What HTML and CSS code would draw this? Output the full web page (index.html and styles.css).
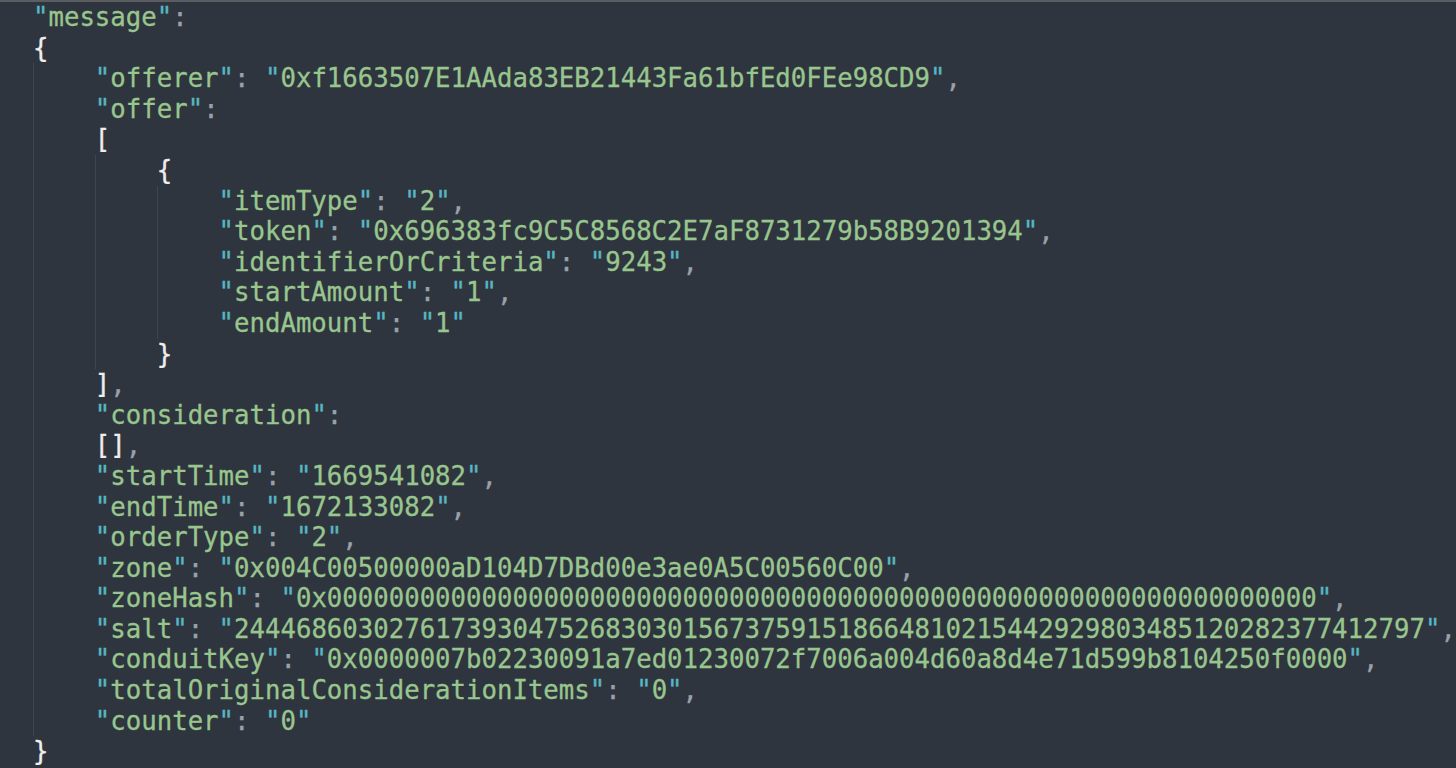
FILE: index.html
```html
<!DOCTYPE html>
<html>
<head>
<meta charset="utf-8">
<link rel="stylesheet" href="styles.css">
</head>
<body>
<div class="code">
<div class="ln"><span class="q">"</span><span class="s">message</span><span class="q">"</span><span class="p">:</span></div>
<div class="ln"><span class="b">{</span></div>
<div class="ln"><span class="ind"></span><span class="q">"</span><span class="s">offerer</span><span class="q">"</span><span class="p">: </span><span class="q">"</span><span class="s">0xf1663507E1AAda83EB21443Fa61bfEd0FEe98CD9</span><span class="q">"</span><span class="p">,</span></div>
<div class="ln"><span class="ind"></span><span class="q">"</span><span class="s">offer</span><span class="q">"</span><span class="p">:</span></div>
<div class="ln"><span class="ind"></span><span class="b">[</span></div>
<div class="ln"><span class="ind"></span><span class="ind"></span><span class="b">{</span></div>
<div class="ln"><span class="ind"></span><span class="ind"></span><span class="ind"></span><span class="q">"</span><span class="s">itemType</span><span class="q">"</span><span class="p">: </span><span class="q">"</span><span class="s">2</span><span class="q">"</span><span class="p">,</span></div>
<div class="ln"><span class="ind"></span><span class="ind"></span><span class="ind"></span><span class="q">"</span><span class="s">token</span><span class="q">"</span><span class="p">: </span><span class="q">"</span><span class="s">0x696383fc9C5C8568C2E7aF8731279b58B9201394</span><span class="q">"</span><span class="p">,</span></div>
<div class="ln"><span class="ind"></span><span class="ind"></span><span class="ind"></span><span class="q">"</span><span class="s">identifierOrCriteria</span><span class="q">"</span><span class="p">: </span><span class="q">"</span><span class="s">9243</span><span class="q">"</span><span class="p">,</span></div>
<div class="ln"><span class="ind"></span><span class="ind"></span><span class="ind"></span><span class="q">"</span><span class="s">startAmount</span><span class="q">"</span><span class="p">: </span><span class="q">"</span><span class="s">1</span><span class="q">"</span><span class="p">,</span></div>
<div class="ln"><span class="ind"></span><span class="ind"></span><span class="ind"></span><span class="q">"</span><span class="s">endAmount</span><span class="q">"</span><span class="p">: </span><span class="q">"</span><span class="s">1</span><span class="q">"</span></div>
<div class="ln"><span class="ind"></span><span class="ind"></span><span class="b">}</span></div>
<div class="ln"><span class="ind"></span><span class="b">]</span><span class="p">,</span></div>
<div class="ln"><span class="ind"></span><span class="q">"</span><span class="s">consideration</span><span class="q">"</span><span class="p">:</span></div>
<div class="ln"><span class="ind"></span><span class="b">[]</span><span class="p">,</span></div>
<div class="ln"><span class="ind"></span><span class="q">"</span><span class="s">startTime</span><span class="q">"</span><span class="p">: </span><span class="q">"</span><span class="s">1669541082</span><span class="q">"</span><span class="p">,</span></div>
<div class="ln"><span class="ind"></span><span class="q">"</span><span class="s">endTime</span><span class="q">"</span><span class="p">: </span><span class="q">"</span><span class="s">1672133082</span><span class="q">"</span><span class="p">,</span></div>
<div class="ln"><span class="ind"></span><span class="q">"</span><span class="s">orderType</span><span class="q">"</span><span class="p">: </span><span class="q">"</span><span class="s">2</span><span class="q">"</span><span class="p">,</span></div>
<div class="ln"><span class="ind"></span><span class="q">"</span><span class="s">zone</span><span class="q">"</span><span class="p">: </span><span class="q">"</span><span class="s">0x004C00500000aD104D7DBd00e3ae0A5C00560C00</span><span class="q">"</span><span class="p">,</span></div>
<div class="ln"><span class="ind"></span><span class="q">"</span><span class="s">zoneHash</span><span class="q">"</span><span class="p">: </span><span class="q">"</span><span class="s">0x0000000000000000000000000000000000000000000000000000000000000000</span><span class="q">"</span><span class="p">,</span></div>
<div class="ln"><span class="ind"></span><span class="q">"</span><span class="s">salt</span><span class="q">"</span><span class="p">: </span><span class="q">"</span><span class="s">24446860302761739304752683030156737591518664810215442929803485120282377412797</span><span class="q">"</span><span class="p">,</span></div>
<div class="ln"><span class="ind"></span><span class="q">"</span><span class="s">conduitKey</span><span class="q">"</span><span class="p">: </span><span class="q">"</span><span class="s">0x0000007b02230091a7ed01230072f7006a004d60a8d4e71d599b8104250f0000</span><span class="q">"</span><span class="p">,</span></div>
<div class="ln"><span class="ind"></span><span class="q">"</span><span class="s">totalOriginalConsiderationItems</span><span class="q">"</span><span class="p">: </span><span class="q">"</span><span class="s">0</span><span class="q">"</span><span class="p">,</span></div>
<div class="ln"><span class="ind"></span><span class="q">"</span><span class="s">counter</span><span class="q">"</span><span class="p">: </span><span class="q">"</span><span class="s">0</span><span class="q">"</span></div>
<div class="ln"><span class="b">}</span></div>
</div>
</body>
</html>
```

FILE: styles.css
```css
html, body {
  margin: 0;
  padding: 0;
  background: #2f353e;
  height: 100%;
  overflow: hidden;
}
body {
  border-top: 2px solid #5a5e63;
  box-sizing: border-box;
}
.code {
  font-family: "DejaVu Sans Mono", "Liberation Mono", monospace;
  font-size: 25.7px;
  line-height: 30.6px;
  padding-left: 33px;
  padding-top: 0;
  color: #abb2bf;
  -webkit-text-stroke: 0.3px currentColor;
}
.ln {
  height: 30.6px;
  display: flex;
  white-space: pre;
}
.ind {
  display: inline-block;
  width: 4ch;
  flex: none;
  box-shadow: inset 1px 0 0 #40464f;
}
.q { color: #56b6c2; }
.s { color: #98c68e; }
.p { color: #9aa1ab; }
.b { color: #eeeeee; }
```
